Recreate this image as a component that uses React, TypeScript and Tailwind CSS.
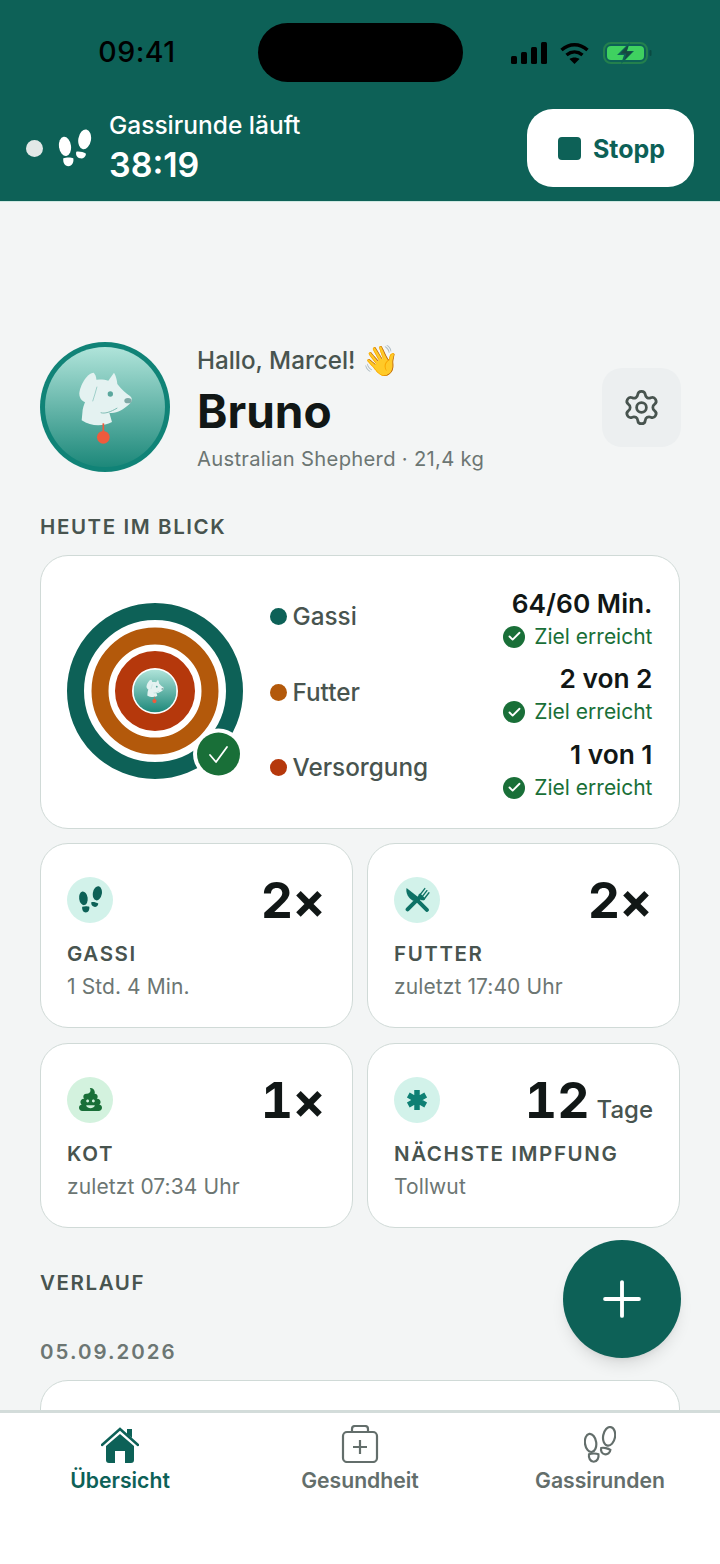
import { Settings, Check, Plus } from 'lucide-react'
import { FaPoo } from 'react-icons/fa'

const Feet = ({ className, outline }: { className?: string; outline?: boolean }) => (
  <svg
    viewBox="145 56 102 114"
    className={className}
    fill={outline ? 'none' : 'currentColor'}
    stroke={outline ? 'currentColor' : 'none'}
    strokeWidth={outline ? 7 : 0}
  >
    <ellipse cx="166" cy="108" rx="18" ry="29" transform="rotate(-8 166 108)" />
    <path d="M161 144c8-3 24-3 30 0 2 12-4 24-15 24s-17-12-15-24z" />
    <ellipse cx="225" cy="87" rx="19" ry="30" transform="rotate(10 225 87)" />
    <path d="M200 124c7-2 22 1 29 6-1 10-9 16-18 14s-14-11-11-20z" />
  </svg>
)

const DogHead = () => (
  <g>
    <path
      d="M100 60c15-3 35-2 45 2l17-24c6 10 9 22 10 34 12 16 26 28 38 36 9 7 6 20-4 26-16 14-38 28-58 24l8 28c-28 14-62 14-91-5l3-32c2-12 8-24 12-36z"
      fill="#e4f2f1"
    />
    <path d="M101 38c-22 2-42 42-43 62-1 26 28 36 38 22 10-18 22-68 5-84z" fill="#e4f2f1" />
    <path d="M98 124c4-14 10-30 13-44" stroke="#9fd0ca" strokeWidth="3" fill="none" />
    <path d="M122 158c12 4 30-2 50-14" stroke="#7fbdb5" strokeWidth="3" fill="none" />
    <circle cx="151" cy="102" r="8" fill="#5aa79d" />
    <ellipse cx="204" cy="122" rx="11" ry="8" fill="#7fa9a6" />
    <path d="M130 190v28" stroke="#ee5b3d" strokeWidth="5" />
    <circle cx="130" cy="232" r="19" fill="#ee5b3d" />
  </g>
)

const Avatar = ({ className, id }: { className?: string; id: string }) => (
  <svg viewBox="0 0 130 130" className={className}>
    <defs>
      <linearGradient id={id} x1="0" y1="0" x2="0" y2="1">
        <stop offset="0" stopColor="#b0e4da" />
        <stop offset="1" stopColor="#1d887a" />
      </linearGradient>
    </defs>
    <circle cx="65" cy="65" r="65" fill="#108377" />
    <circle cx="65" cy="65" r="60" fill={`url(#${id})`} />
    <g transform="translate(20 18) scale(0.3333)">
      <DogHead />
    </g>
  </svg>
)

const Rings = () => (
  <svg viewBox="0 0 196 196" className="w-[196px] h-[196px] shrink-0">
    <circle cx="88" cy="88" r="79.5" fill="none" stroke="#0d6157" strokeWidth="17" />
    <circle cx="88" cy="88" r="55" fill="none" stroke="#b3590b" strokeWidth="17" />
    <circle cx="88" cy="88" r="31.5" fill="none" stroke="#b5380c" strokeWidth="17" />
    <svg x="66.500" y="66.500" width="43" height="43" viewBox="0 0 130 130">
      <defs>
        <linearGradient id="ringAv" x1="0" y1="0" x2="0" y2="1">
          <stop offset="0" stopColor="#b0e4da" />
          <stop offset="1" stopColor="#1d887a" />
        </linearGradient>
      </defs>
      <circle cx="65" cy="65" r="65" fill="url(#ringAv)" />
      <g transform="translate(20 18) scale(0.3333)">
        <DogHead />
      </g>
    </svg>
    <circle cx="151.500" cy="151" r="25.500" fill="#fff" />
    <circle cx="151.500" cy="151" r="21.500" fill="#196f38" />
    <path d="M143 152l6 7 11-15" fill="none" stroke="#fff" strokeWidth="1.800" strokeLinecap="round" strokeLinejoin="round" />
  </svg>
)

const GoalCheck = () => (
  <span className="w-[22px] h-[22px] rounded-full bg-[#196f38] flex items-center justify-center">
    <Check className="w-[15px] h-[15px] text-white" strokeWidth={3} />
  </span>
)

const Legend = ({ color, label }: { color: string; label: string }) => (
  <div className="flex items-center gap-[6px] h-[30px]">
    <span className={`w-[17px] h-[17px] rounded-full ${color}`} />
    <span className="text-[24.300px] font-medium text-[#48544f]">{label}</span>
  </div>
)

const Goal = ({ value }: { value: string }) => (
  <div className="flex flex-col items-end h-[75.500px]">
    <span className="text-[26.300px] leading-[34px] font-semibold text-[#111716]">{value}</span>
    <span className="mt-[1px] flex items-center gap-[9px] text-[21px] leading-[30px] text-[#196f38]">
      <GoalCheck />
      Ziel erreicht
    </span>
  </div>
)

const ForkKnife = () => (
  <svg viewBox="0 0 24 24" className="w-[25px] h-[25px] text-[#0e7266]" fill="none" stroke="currentColor">
    <path d="M2.500 21.500L14 10" strokeWidth="3.800" strokeLinecap="round" />
    <path d="M14 8l5-6.500M16 10l5-6.500M18 12l5-6.500" strokeWidth="1.300" strokeLinecap="round" />
    <path d="M13 7.500c-.5 2 0 3 1 4s2.500 1.500 4.500 1l1-1.500-5-5z" fill="currentColor" stroke="none" />
    <path d="M10 11l11 11" strokeWidth="3.800" strokeLinecap="round" />
    <path d="M1.500 1c-1 5 1.500 9.500 6.500 12.500l4.500-4z" fill="currentColor" stroke="none" />
  </svg>
)

const Asterisk = () => (
  <svg viewBox="0 0 22 22" className="w-[22px] h-[22px] text-[#0e8074]" stroke="currentColor" strokeWidth="5.500">
    <path d="M11 1v20M2.300 6l17.400 10M19.700 6L2.300 16" />
  </svg>
)

const StatCard = ({
  icon,
  iconBg,
  value,
  unit,
  title,
  sub,
}: {
  icon: React.ReactNode
  iconBg: string
  value: string
  unit: string
  title: string
  sub: string
}) => (
  <div className="h-[185px] bg-white rounded-[28px] border-[1.500px] border-[#d0dad7] pl-[26px] pr-[26px] pt-[32.500px]">
    <div className="flex justify-between h-[46px]">
      <span className={`w-[46px] h-[46px] rounded-full flex items-center justify-center ${iconBg}`}>{icon}</span>
      <div className="flex items-baseline text-[#111716] -mt-[8px]">
        <span className="text-[50px] leading-[62px] font-bold tabular-nums">{value}</span>
        {unit === '×' ? (
          <span className="text-[50px] leading-[62px] font-bold -ml-[1px]">×</span>
        ) : (
          <span className="text-[24px] font-medium text-[#48544f] ml-[7px]">{unit}</span>
        )}
      </div>
    </div>
    <div className="mt-[18px] text-[20.500px] leading-[26px] font-semibold tracking-[1.600px] text-[#48544f]">{title}</div>
    <div className="mt-[7px] text-[21px] leading-[26px] text-[#6c7673] tracking-[0.100px]">{sub}</div>
  </div>
)

const NavItem = ({ icon, label, active }: { icon: React.ReactNode; label: string; active?: boolean }) => (
  <div className={`flex-1 flex flex-col items-center ${active ? 'text-[#0d6157]' : 'text-[#636e6b]'}`}>
    <div className="h-[38px] flex items-end justify-center">{icon}</div>
    <span className="text-[21.200px] leading-[34px] font-semibold">{label}</span>
  </div>
)

export default function App() {
  return (
    <div className="relative w-[720px] h-[1564px] overflow-hidden flex flex-col bg-[#f3f5f5] font-['Inter',sans-serif]">
      <header className="h-[202px] shrink-0 bg-[#0d6157] border-b border-[#cfe8e2]">
        <div className="flex items-center pt-[23px] h-[82px]">
          <span className="w-[258px] text-center text-[28.500px] font-medium text-black tracking-[0.500px] pl-[16px]">09:41</span>
          <span className="w-[205px] h-[59px] rounded-full bg-black" />
          <div className="flex items-center pl-[48px]">
            <svg viewBox="0 0 36 22" className="w-[36px] h-[22px]" fill="#000">
              <rect x="0" y="14" width="6" height="8" rx="1.500" />
              <rect x="10" y="10" width="6" height="12" rx="1.500" />
              <rect x="20" y="5" width="6" height="17" rx="1.500" />
              <rect x="30" y="0" width="6" height="22" rx="1.500" />
            </svg>
            <svg viewBox="0 0 30 22" className="w-[31px] h-[22px] ml-[12px]" fill="none" stroke="#000" strokeWidth="3.500">
              <path d="M2 8c8-7 18-7 26 0" />
              <path d="M7 13c5-4 11-4 16 0" />
              <path d="M15 22l-5-5c3-2 7-2 10 0z" fill="#000" stroke="none" />
            </svg>
            <svg viewBox="0 0 49 22" className="w-[49px] h-[22px] ml-[13px]">
              <rect x="1" y="1" width="43" height="20" rx="7" fill="none" stroke="#23804d" strokeWidth="2" />
              <rect x="4" y="4" width="37" height="14" rx="4" fill="#3fd160" />
              <path d="M27 0L14 13h7l-3 9 13-13h-7z" fill="#0d6157" />
              <path d="M25.500 3L17.500 11.500h6l-2 6.500 8-8.500h-6z" fill="#17483f" />
              <rect x="46.500" y="8" width="2" height="6" rx="1" fill="#0a4a42" />
            </svg>
          </div>
        </div>
        <div className="flex items-center justify-between mt-[27px] pl-[26px] pr-[26px]">
          <div className="flex items-center">
            <span className="w-[17px] h-[17px] rounded-full bg-[#e2e8e7]" />
            <Feet className="w-[34px] h-[38px] ml-[15px] text-white" />
            <div className="ml-[17px] h-[78px]">
              <div className="text-[24.500px] leading-[32px] font-medium text-white">Gassirunde läuft</div>
              <div className="pt-[1px] text-[34px] leading-[46px] font-semibold text-white">38:19</div>
            </div>
          </div>
          <div className="w-[167px] h-[78px] rounded-[26px] bg-white flex items-center justify-center gap-[12px] pl-[2px] text-[#0d6157]">
            <span className="w-[23px] h-[23px] rounded-[4px] bg-[#0d6157]" />
            <span className="pt-[3px] text-[25px] font-bold">Stopp</span>
          </div>
        </div>
      </header>

      <main className="flex-1 min-h-0 overflow-hidden px-[40px] pt-[139px]">
        <div className="flex items-center">
          <Avatar id="mainAv" className="w-[130px] h-[130px] shrink-0" />
          <div className="ml-[27px] flex-1 pt-[4px]">
            <div className="text-[24.200px] leading-[30px] font-medium text-[#48544f]">
              Hallo, Marcel! <span className="text-[30px] leading-[30px] align-[-2px]">👋</span>
            </div>
            <div className="mt-[5px] text-[46px] leading-[60px] font-bold text-[#111716]">Bruno</div>
            <div className="mt-[4px] text-[20.200px] leading-[28px] text-[#6c7673] tracking-[0.300px]">Australian Shepherd · 21,4 kg</div>
          </div>
          <div className="w-[79px] h-[79px] -mr-[1px] rounded-[20px] bg-[#eceff0] flex items-center justify-center">
            <Settings className="w-[39px] h-[39px] text-[#48544f]" strokeWidth={1.700} />
          </div>
        </div>

        <div className="mt-[40px] text-[20.500px] leading-[28px] font-semibold tracking-[1.600px] text-[#48544f]">HEUTE IM BLICK</div>

        <div className="mt-[14px] h-[274px] bg-white rounded-[28px] border-[1.500px] border-[#d0dad7] pl-[25.500px] pr-[26.500px] pt-[46.500px] flex">
          <Rings />
          <div className="ml-[7px] flex-1 flex flex-col gap-[45.500px] -mt-[1px]">
            <Legend color="bg-[#0d6157]" label="Gassi" />
            <Legend color="bg-[#b3590b]" label="Futter" />
            <Legend color="bg-[#b5380c]" label="Versorgung" />
          </div>
          <div className="-mt-[16px]">
            <Goal value="64/60 Min." />
            <Goal value="2 von 2" />
            <Goal value="1 von 1" />
          </div>
        </div>

        <div className="mt-[14px] grid grid-cols-2 gap-x-[14px] gap-y-[15px]">
          <StatCard
            icon={<Feet className="w-[25px] h-[27px] text-[#0d6157]" />}
            iconBg="bg-[#d2f2ea]"
            value="2"
            unit="×"
            title="GASSI"
            sub="1 Std. 4 Min."
          />
          <StatCard icon={<ForkKnife />} iconBg="bg-[#d2f2ea]" value="2" unit="×" title="FUTTER" sub="zuletzt 17:40 Uhr" />
          <StatCard
            icon={<FaPoo className="w-[23px] h-[23px] text-[#196f38]" />}
            iconBg="bg-[#d3f2de]"
            value="1"
            unit="×"
            title="KOT"
            sub="zuletzt 07:34 Uhr"
          />
          <StatCard icon={<Asterisk />} iconBg="bg-[#d2f2ea]" value="12" unit="Tage" title="NÄCHSTE IMPFUNG" sub="Tollwut" />
        </div>

        <div className="mt-[41px] text-[20.500px] leading-[28px] font-semibold tracking-[1.600px] text-[#48544f]">VERLAUF</div>
        <div className="mt-[41px] text-[20.500px] leading-[28px] font-semibold tracking-[2px] text-[#6c7673]">05.09.2026</div>
        <div className="mt-[14px] h-[80px] bg-white rounded-[28px] border-[1.500px] border-[#d0dad7]" />
      </main>

      <nav className="h-[154px] shrink-0 bg-white border-t-[3px] border-[#d3dcda] pt-[12px] flex">
        <NavItem
          active
          label="Übersicht"
          icon={
            <svg viewBox="0 0 38 36" className="w-[38px] h-[36px]" fill="currentColor">
              <path d="M1 18L19 2l18 16" fill="none" stroke="currentColor" strokeWidth="2.500" strokeLinecap="round" />
              <path d="M26 2h5v9l-5-4z" />
              <path d="M19 7l14 12v14c0 2-1 3-3 3h-6V24h-10v12H8c-2 0-3-1-3-3V19z" />
            </svg>
          }
        />
        <NavItem
          label="Gesundheit"
          icon={
            <svg viewBox="0 0 38 38" className="w-[38px] h-[38px]" fill="none" stroke="currentColor" strokeWidth="2.200">
              <rect x="2" y="7" width="34" height="30" rx="4" />
              <path d="M11 7V4c0-2 1-3 3-3h10c2 0 3 1 3 3v3" />
              <path d="M19 15v14M12 22h14" />
            </svg>
          }
        />
        <NavItem label="Gassirunden" icon={<Feet outline className="w-[32px] h-[37px]" />} />
      </nav>

      <button className="absolute left-[563px] top-[1240px] w-[118px] h-[118px] rounded-full bg-[#0d6157] flex items-center justify-center shadow-lg">
        <Plus className="w-[58px] h-[58px] text-white" strokeWidth={1.600} />
      </button>
    </div>
  )
}
